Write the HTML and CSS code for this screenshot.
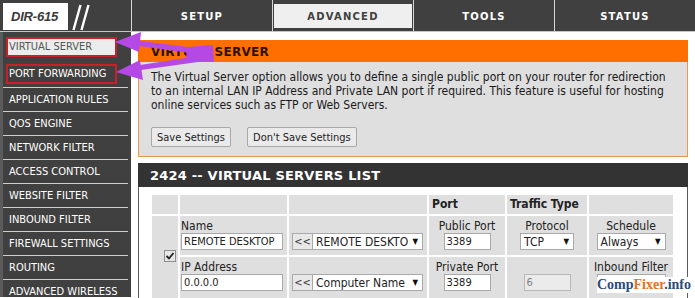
FILE: index.html
```html
<!DOCTYPE html>
<html>
<head>
<meta charset="utf-8">
<title>DIR-615 Virtual Server</title>
<link rel="stylesheet" href="styles.css">
</head>
<body>
<div class="page">
  <header class="topbar">
    <div class="brand">
      <div class="logo">DIR-615</div>
      <svg class="slashes" width="20" height="28" viewBox="0 0 20 28"><path d="M2.5 27 L9.5 2 M10.5 27 L17.5 2" stroke="#ffffff" stroke-width="2.4" fill="none"/></svg>
    </div>
    <nav class="tabs">
      <div class="tab"><span class="tab-label">SETUP</span></div>
      <div class="tab active"><span class="tab-label">ADVANCED</span></div>
      <div class="tab"><span class="tab-label">TOOLS</span></div>
      <div class="tab"><span class="tab-label">STATUS</span></div>
    </nav>
  </header>
  <div class="main">
    <aside class="sidebar">
      <div class="item"><span class="mark selected">VIRTUAL SERVER</span></div>
      <div class="item"><span class="mark">PORT FORWARDING</span></div>
      <div class="item">APPLICATION RULES</div>
      <div class="item">QOS ENGINE</div>
      <div class="item">NETWORK FILTER</div>
      <div class="item">ACCESS CONTROL</div>
      <div class="item">WEBSITE FILTER</div>
      <div class="item">INBOUND FILTER</div>
      <div class="item">FIREWALL SETTINGS</div>
      <div class="item">ROUTING</div>
      <div class="item">ADVANCED WIRELESS</div>
    </aside>
    <section class="content">
      <div class="panel">
        <h2 class="panel-title">VIRTUAL SERVER</h2>
        <div class="panel-body">
          <p class="desc">The Virtual Server option allows you to define a single public port on your router for redirection<br>to an internal LAN IP Address and Private LAN port if required. This feature is useful for hosting<br>online services such as FTP or Web Servers.</p>
          <div class="buttons">
            <button class="btn">Save Settings</button>
            <button class="btn">Don't Save Settings</button>
          </div>
        </div>
      </div>
      <div class="list">
        <h2 class="list-title">2424 -- VIRTUAL SERVERS LIST</h2>
        <div class="list-body">
          <table class="vs-table">
            <tr class="head-row">
              <td class="c1"></td>
              <td class="c2"></td>
              <td class="c3"></td>
              <td class="c4"><b>Port</b></td>
              <td class="c5"><b>Traffic Type</b></td>
              <td class="c6"></td>
            </tr>
            <tr class="row">
              <td class="c1 check-cell" rowspan="2"><span class="checkbox"><svg width="10" height="10" viewBox="0 0 10 10"><path d="M1.5 5 L4 7.5 L8.5 2" stroke="#222" stroke-width="1.8" fill="none"/></svg></span></td>
              <td class="c2 left"><div class="lbl">Name</div><input class="field wide" type="text" value="REMOTE DESKTOP"></td>
              <td class="c3 left"><div class="lbl">&nbsp;</div><div class="combo"><span class="copy-btn">&lt;&lt;</span><span class="select sel-app">REMOTE DESKTO<i class="caret">▼</i></span></div></td>
              <td class="c4"><div class="lbl">Public Port</div><input class="field port" type="text" value="3389"></td>
              <td class="c5"><div class="lbl">Protocol</div><span class="select sel-proto">TCP<i class="caret">▼</i></span></td>
              <td class="c6"><div class="lbl">Schedule</div><span class="select sel-sched">Always<i class="caret">▼</i></span></td>
            </tr>
            <tr class="row">
              <td class="c2 left"><div class="lbl">IP Address</div><input class="field wide" type="text" value="0.0.0.0"></td>
              <td class="c3 left"><div class="lbl">&nbsp;</div><div class="combo"><span class="copy-btn">&lt;&lt;</span><span class="select sel-app">Computer Name<i class="caret">▼</i></span></div></td>
              <td class="c4"><div class="lbl">Private Port</div><input class="field port" type="text" value="3389"></td>
              <td class="c5"><div class="lbl">&nbsp;</div><input class="field port disabled" type="text" value="6" disabled></td>
              <td class="c6"><div class="lbl">Inbound Filter</div><span class="select sel-sched"></span></td>
            </tr>
          </table>
        </div>
      </div>
    </section>
  </div>
  <svg class="arrows" width="695" height="298" viewBox="0 0 695 298">
    <g fill="#b449e6" stroke="none">
      <polygon points="187,47 213,45 214,62 186,61"/>
      <polygon points="212,50 212,56 139,46 140,41"/>
      <polygon points="115,42 141,32 139,52"/>
      <polygon points="212,54 212,60 141,70 140,65"/>
      <polygon points="116,72 140,60 143,80"/>
    </g>
  </svg>
  <div class="watermark"><span class="wm-blue">Comp</span><span class="wm-orange">Fixer</span><span class="wm-blue">.info</span></div>
</div>
</body>
</html>
```
FILE: styles.css
```css
* { box-sizing: border-box; }
html, body { margin: 0; padding: 0; }
body {
  width: 695px;
  height: 298px;
  overflow: hidden;
  background: #ffffff;
  font-family: "DejaVu Sans Condensed", "DejaVu Sans", sans-serif;
  font-stretch: condensed;
}
.page { position: relative; width: 695px; height: 298px; overflow: hidden; }

/* top bar */
.topbar {
  display: flex;
  height: 32px;
  background: #404040;
  border-bottom: 1px solid #c4c4c4;
}
.brand {
  width: 131px;
  display: flex;
  align-items: flex-start;
  padding: 3px 0 0 3px;
}
.logo {
  width: 65px;
  height: 27px;
  background: #ffffff;
  color: #3a3a3a;
  font-family: "Liberation Sans", Arial, sans-serif;
  font-weight: bold;
  font-style: italic;
  font-size: 13px;
  line-height: 27px;
  padding-left: 8px;
  letter-spacing: -0.2px;
}
.slashes { margin: 0 0 0 3px; display: block; }
.tabs { flex: 1; display: flex; }
.tab {
  flex: 1;
  border-left: 1px solid #d6d6d6;
  display: flex;
  padding: 4px 1px 3px 1px;
}
.tab-label {
  flex: 1;
  display: flex;
  align-items: center;
  justify-content: center;
  color: #ffffff;
  font-family: "DejaVu Sans", sans-serif;
  font-stretch: normal;
  font-weight: bold;
  font-size: 10px;
  letter-spacing: 1.2px;
}
.tab.active .tab-label { background: #efefef; color: #404040; }

/* main */
.main { display: flex; height: 265px; }
.sidebar {
  width: 131px;
  background: #404040;
  border-left: 3px solid #5a5a5a;
  padding: 2px 3px 0 0;
}
.item {
  height: 24px;
  border-bottom: 1px solid #cfcfcf;
  color: #ffffff;
  font-size: 11px;
  line-height: 23px;
  padding-left: 6px;
  white-space: nowrap;
}
.item:first-child { border-bottom-color: #404040; }
.mark {
  display: block;
  margin: 3px 11px 0 -3px;
  height: 20px;
  line-height: 16px;
  border: 2px solid #c8202a;
  padding-left: 1px;
}
.mark.selected { background: #ececec; color: #555555; }

.content { flex: 1; padding: 8px 7px 0 7px; }

/* orange panel */
.panel-title {
  margin: 0;
  height: 22px;
  background: #ff6f00;
  color: #2b1300;
  font-family: "DejaVu Sans", sans-serif;
  font-stretch: normal;
  font-weight: bold;
  font-size: 12px;
  line-height: 24px;
  padding-left: 13px;
  letter-spacing: 0.3px;
}
.panel-body {
  background: #dfdfdf;
  border: 1px solid #e09a55;
  border-top: none;
  padding: 8px 11px 9px 12px;
}
.desc {
  margin: 0;
  font-size: 12px;
  line-height: 14px;
  color: #1a1a1a;
  white-space: nowrap;
}
.buttons { display: flex; gap: 16px; margin-top: 15px; }
.btn {
  height: 20px;
  padding: 0 5px;
  font-family: inherit;
  font-stretch: condensed;
  font-size: 11px;
  color: #222;
  background: #eaeaea;
  border: 1px solid #a8a8a8;
  border-radius: 2px;
}

/* list panel */
.list { margin-top: 6px; }
.list-title {
  margin: 0;
  height: 24px;
  background: #333333;
  color: #ffffff;
  font-family: "DejaVu Sans", sans-serif;
  font-stretch: normal;
  font-weight: bold;
  font-size: 13px;
  letter-spacing: 0.2px;
  line-height: 25px;
  padding-left: 12px;
}
.list-body {
  border: 1px solid #5a5a5a;
  border-top: none;
  padding: 6px 0 0 11px;
  height: 120px;
}
.vs-table { border-collapse: separate; border-spacing: 2px; font-size: 12px; color: #222; }
.vs-table td {
  background: #dfdfdf;
  padding: 3px 2px 4px 2px;
  text-align: center;
  vertical-align: top;
  line-height: 14px;
}
.vs-table td.left { text-align: left; padding-left: 1px; }
.head-row td { height: 19px; padding: 2px 3px 0; text-align: left; font-size: 12px; }
.c1 { width: 26px; }
.c2 { width: 107px; }
.c3 { width: 138px; }
.c4 { width: 76px; }
.c5 { width: 80px; }
.c6 { width: 84px; }
.row td { height: 39px; }
.vs-table td.check-cell { vertical-align: middle; padding: 0; text-align: center; }
.checkbox {
  display: inline-flex;
  width: 12px;
  height: 12px;
  border: 1px solid #8e8e8e;
  background: #e6e6e6;
  align-items: center;
  justify-content: center;
  margin-left: 10px;
}
.lbl { height: 14px; white-space: nowrap; }
.field {
  display: block;
  height: 17px;
  border: 1px solid #a9a9a9;
  background: #ffffff;
  font-family: inherit;
  font-stretch: condensed;
  font-size: 11px;
  color: #222;
  padding: 0 2px;
  margin: 0;
}
.field.wide { width: 102px; }
.field.port { width: 47px; margin: 0 auto; }
.field.disabled { background: #ebebeb; border-color: #b8b8b8; color: #808080; }
.combo { display: flex; padding-left: 2px; }
.copy-btn {
  width: 21px;
  height: 17px;
  border: 1px solid #a9a9a9;
  background: #e8e8e8;
  font-size: 11px;
  line-height: 15px;
  text-align: center;
  color: #333;
}
.select {
  display: inline-flex;
  align-items: center;
  justify-content: space-between;
  height: 17px;
  border: 1px solid #a9a9a9;
  background: #ffffff;
  padding: 0 4px 0 3px;
  font-size: 12px;
  color: #222;
  text-align: left;
  white-space: nowrap;
}
.caret { font-style: normal; font-size: 8px; color: #111; font-family: "DejaVu Sans", sans-serif; }
.sel-app { width: 110px; border-left: none; }
.sel-proto { width: 54px; }
.sel-sched { width: 69px; }

/* overlays */
.arrows { position: absolute; left: 0; top: 0; pointer-events: none; }
.watermark {
  position: absolute;
  left: 597px;
  top: 277px;
  width: 93px;
  height: 16px;
  background: #ffffff;
  font-family: "Liberation Serif", "DejaVu Serif", serif;
  font-weight: bold;
  font-size: 14px;
  line-height: 16px;
  text-align: center;
  white-space: nowrap;
}
.wm-blue { color: #2c4a7c; }
.wm-orange { color: #e8701e; }
```
